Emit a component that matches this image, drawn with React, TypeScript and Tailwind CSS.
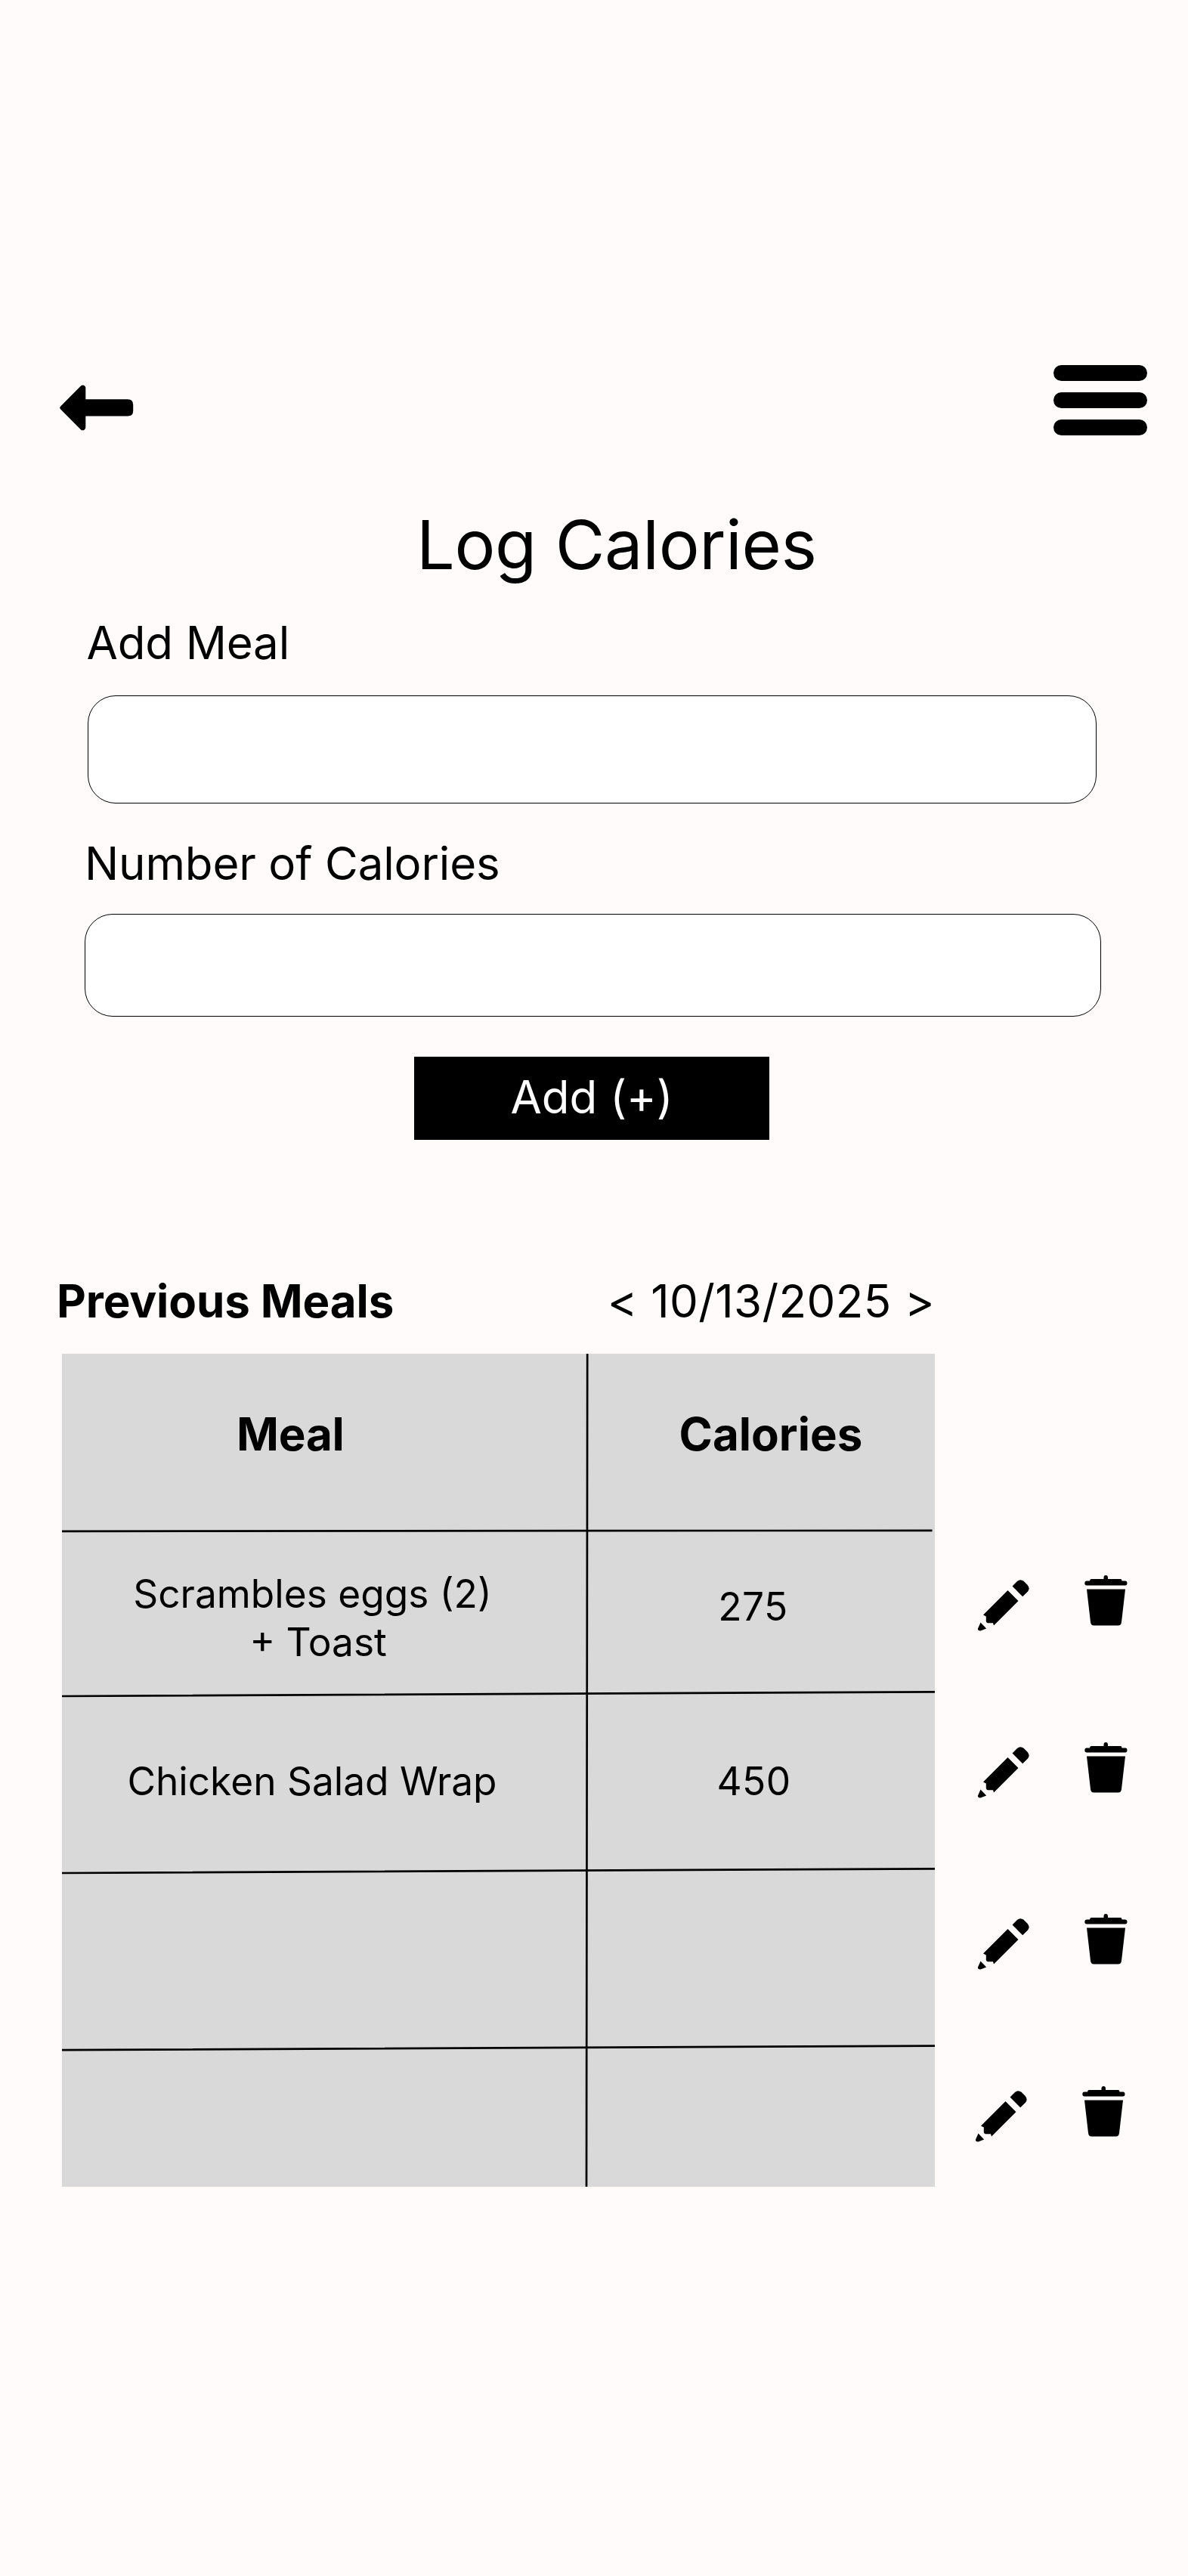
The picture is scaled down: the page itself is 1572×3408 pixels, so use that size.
function ArrowIcon() {
  return (
    <svg width="98" height="62" viewBox="0 0 98 62" className="block">
      <path d="M1.200 28.500 28 1.600Q30.500-.3 33 1.400 34.300 2.600 34.300 4V19.200H90Q97.200 19.200 97.200 26.500V34.500Q97.200 41.500 90 41.500H34.300V56Q34.300 58.500 32.500 59.700 30 61 28 59.400L1.200 32.500Q-.8 30.500 1.200 28.500Z" />
    </svg>
  );
}

function PencilIcon() {
  return (
    <svg width="68" height="68" viewBox="0 0 68 68" className="block">
      <path d="M45.500 8.500 52 2Q56-1.500 60.500 1.800L65.500 6.800Q69.500 11.500 66 15.500L59.200 22.300Z" />
      <path d="M39.500 14 53.500 28 21 60.500 20 57.200H13Q11.200 56.800 10.800 55V48.500L7 46.500Z" />
      <path d="M3.500 56.500 11.200 64.500 3.500 67.500Q-.3 67.800 0 64.500Z" />
    </svg>
  );
}

function TrashIcon() {
  return (
    <svg width="57" height="67" viewBox="0 0 57 67" className="block">
      <path d="M25.500 5V3Q25.500 0 28.200 0T31 3V5H48Q49.500 5 49.500 7.500H54Q56.500 7.500 56.500 10.500T54 13.500H3Q.3 13.500 .3 10.500T3 7.500H7Q7 5 9 5Z" />
      <path d="M3 18.500H54L49 62Q48.500 66.500 44.500 66.500H12.500Q8.500 66.500 8 62Z" />
    </svg>
  );
}

function RowActions({ className }: { className: string }) {
  return (
    <div className={"flex items-start " + className}>
      <button className="mt-[6px]" aria-label="Edit"><PencilIcon /></button>
      <button className="ml-[73px]" aria-label="Delete"><TrashIcon /></button>
    </div>
  );
}

export default function App() {
  return (
    <div className="w-[1572px] h-[3408px] bg-[#fffbfb] overflow-hidden font-['Inter',sans-serif] text-black whitespace-nowrap">
      <header className="mt-[482px] h-[94px] pl-[79px] pr-[54px] flex justify-between items-start">
        <button className="mt-[27px]" aria-label="Back"><ArrowIcon /></button>
        <button className="flex flex-col gap-[15px] mt-px" aria-label="Menu">
          <span className="block w-[124px] h-[21px] rounded-full bg-black" />
          <span className="block w-[124px] h-[21px] rounded-full bg-black" />
          <span className="block w-[124px] h-[21px] rounded-full bg-black" />
        </button>
      </header>

      <h1 className="mt-[90px] ml-[551px] text-[90px] leading-[109px] tracking-[-0.4px]">Log Calories</h1>

      <div className="mt-[39px]">
        <label className="block ml-[114.5px] text-[60px] leading-[73px] tracking-[-0.15px]">Add Meal</label>
        <input className="block mt-[33px] ml-[116px] w-[1335px] h-[143px] rounded-[37px] border border-black bg-white" />
      </div>
      <div className="mt-[43px]">
        <label className="block ml-[112px] text-[60px] leading-[73px] tracking-[-0.15px]">Number of Calories</label>
        <input className="block mt-[30px] ml-[112px] w-[1345px] h-[136px] rounded-[37px] border border-black bg-white" />
      </div>
      <button className="block mt-[53px] ml-[548px] w-[470px] h-[110px] pb-[3px] bg-black text-white text-[60px] leading-[73px]">Add (+)</button>

      <div className="mt-[177px] ml-[75px] w-[1162px] flex justify-between text-[60px] leading-[73px]">
        <h2 className="font-bold tracking-[-0.1px]">Previous Meals</h2>
        <div className="tracking-[0.4px]">&lt; 10/13/2025 &gt;</div>
      </div>

      <div className="mt-[33px] flex">
        <div className="relative ml-[82px] w-[1155px] h-[1102px] bg-[#d9d9d9] grid grid-cols-[694px_461px] grid-rows-[235px_216px_234px_234px_183px] text-center text-[51.4px] leading-[63.6px]">
          <div className="pt-[70px] pl-[231px] text-left text-[60px] leading-[73px] font-bold tracking-[-0.15px]">Meal</div>
          <div className="pt-[70px] pl-[122.5px] text-left text-[60px] leading-[73px] font-bold">Calories</div>
          <div className="pt-[51px] pr-[31px]">Scrambles eggs (2)<br /><span className="pl-[15px]">+ Toast</span></div>
          <div className="pt-[68px] pr-[20px] tracking-[0.4px]">275</div>
          <div className="pt-[83px] pr-[32px]">Chicken Salad Wrap</div>
          <div className="pt-[83px] pr-[18px] tracking-[0.4px]">450</div>
          <svg className="absolute inset-0" width="1155" height="1102" stroke="black" strokeWidth="2.700">
            <path d="M0 234.800 1151.500 233.800M0 453 1155 447.300M0 687 1155 681.400M0 921.200 1155 915.600M695.200 0 694 1102" />
          </svg>
        </div>
        <div className="ml-[57px] pt-[293px]">
          <RowActions className="h-[221px]" />
          <RowActions className="h-[227px]" />
          <RowActions className="h-[228px]" />
          <RowActions className="-ml-[3px] h-[80px]" />
        </div>
      </div>
    </div>
  );
}
